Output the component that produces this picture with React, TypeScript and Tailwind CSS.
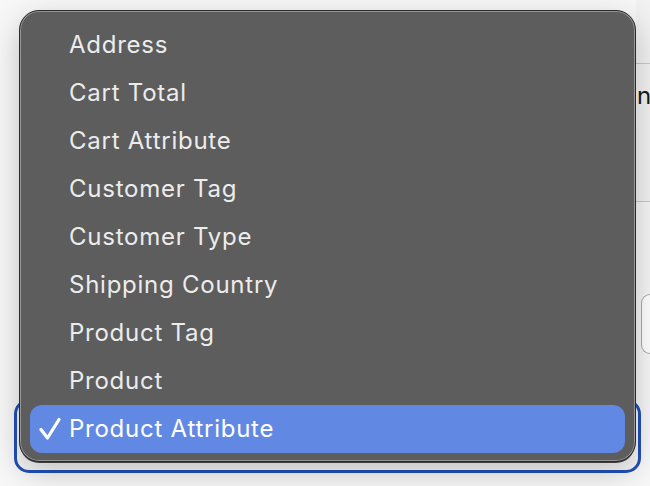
import React from "react";

const options = [
  "Address",
  "Cart Total",
  "Cart Attribute",
  "Customer Tag",
  "Customer Type",
  "Shipping Country",
  "Product Tag",
  "Product",
  "Product Attribute",
];

const selected = "Product Attribute";

function Check() {
  return (
    <svg width="22" height="24" viewBox="0 0 22 24" className="shrink-0">
      <path d="M2 12.5 L8.5 21 L20 2.5" fill="none" stroke="#ffffff" strokeWidth="3.2" strokeLinecap="round" strokeLinejoin="round" />
    </svg>
  );
}

export default function App() {
  return (
    <div className="relative w-[650px] h-[486px] overflow-hidden bg-[#f7f7f7] font-['Inter','Liberation_Sans',sans-serif]">
      {/* page behind the open menu */}
      <div className="flex flex-col">
        <div className="ml-[636px] h-[64px] border-b border-[#c8c8c8] bg-[#f1f1f1]" />
        <div className="ml-[637px] h-[64px] flex items-center overflow-hidden whitespace-nowrap bg-[#f1f1f1] text-[24px] text-[#1a1a1a]">
          n
        </div>
        <div className="ml-[636px] h-[74px] border-b border-[#c8c8c8] bg-[#f1f1f1]" />
        <div className="ml-[636px] h-[92px] bg-[#f5f5f5]" />
        <div className="ml-[641px] h-[60px] rounded-l-[10px] border border-r-0 border-[#a9a9a9] bg-white" />
        <div className="mt-[45px] ml-[14px] w-[627px] h-[74px] rounded-[15px] border-[3px] border-[#2150b8]" />
      </div>

      {/* popup menu */}
      <div className="absolute left-[19px] top-[10px] w-[617px] h-[452px] rounded-[20px] border border-[#2b2b2b] bg-[#5d5d5d] shadow-[0_10px_30px_rgba(0,0,0,0.22),0_2px_0_-1px_#4a4a4a,inset_0_0_0_1px_rgba(255,255,255,0.35)]">
        <div className="flex flex-col px-[10px] pt-[10px]">
          {options.map((o) => {
            const active = o === selected;
            return (
              <div
                key={o}
                className={
                  active
                    ? "h-[48px] flex items-center rounded-[12px] bg-[#6189e3] pl-[9px] gap-[8px] text-[24px] tracking-[0.75px] text-white"
                    : "h-[48px] flex items-center pl-[39px] text-[24px] tracking-[0.75px] text-[#ececec]"
                }
              >
                {active && <Check />}
                <span>{o}</span>
              </div>
            );
          })}
        </div>
      </div>
    </div>
  );
}
